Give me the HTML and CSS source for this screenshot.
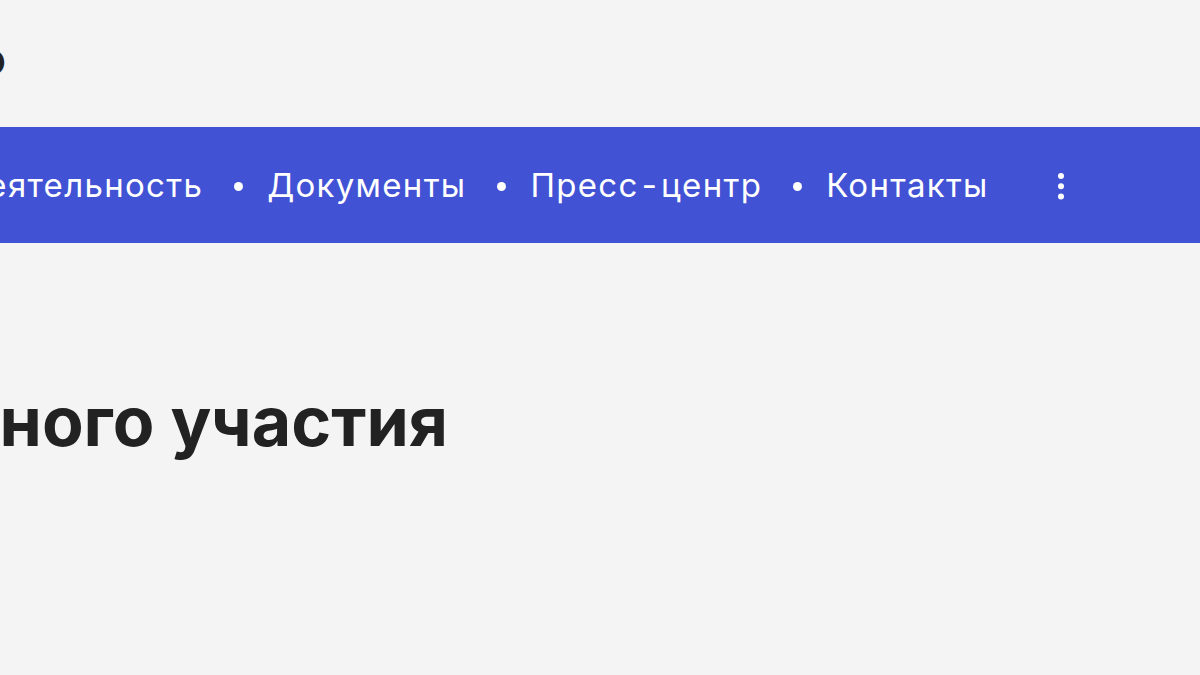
FILE: index.html
```html
<!DOCTYPE html>
<html lang="ru">
<head>
    <meta charset="UTF-8">
    <meta name="viewport" content="width=device-width, initial-scale=1.0">
    <title>Общественное участие</title>
    <link rel="stylesheet" href="styles.css">
</head>
<body>
    <div class="page">
        <!-- шапка -->
        <header class="top">
            <div class="logo-row">
                <span class="logo">Общественное бюро</span>
            </div>
        </header>

        <!-- меню -->
        <nav class="menu">
            <ul class="menu-list">
                <li><a href="javascript:;">Деятельность</a></li>
                <li class="dot"></li>
                <li><a href="javascript:;">Документы</a></li>
                <li class="dot"></li>
                <li><a href="javascript:;">Пресс<span class="dash">-</span>центр</a></li>
                <li class="dot"></li>
                <li><a href="javascript:;">Контакты</a></li>
            </ul>
            <a class="more" href="javascript:;">
                <svg width="8" height="28" viewBox="0 0 8 28">
                    <circle cx="4" cy="4" r="3" fill="#fff"/>
                    <circle cx="4" cy="14.3" r="3" fill="#fff"/>
                    <circle cx="4" cy="24.6" r="3" fill="#fff"/>
                </svg>
            </a>
        </nav>

        <!-- заголовок -->
        <main class="content">
            <div class="title-row">
                <h1 class="title">Формы общественного участия</h1>
            </div>
        </main>
    </div>
</body>
</html>
```

FILE: styles.css
```css
*{
    margin: 0;
    padding: 0;
}
html, body{
    background-color: #f4f4f4;
    overflow: hidden;
}
body{
    font-family: Inter, "Noto Sans", "Liberation Sans", sans-serif;
    color: #222222;
}
.page{
    width: 1200px;
    height: 675px;
}

/* шапка */
.top{
    height: 127px;
}
.logo-row{
    display: flex;
    justify-content: flex-end;
    width: 6px;
    padding-top: 30px;
}
.logo{
    font-size: 46px;
    font-weight: 700;
    white-space: nowrap;
    line-height: 56px;
}

/* меню */
.menu{
    height: 116px;
    background-color: #4152d4;
    display: flex;
    align-items: center;
}
.menu-list{
    list-style: none;
    display: flex;
    align-items: center;
    margin-left: -41px;
}
.menu-list a{
    color: #ffffff;
    text-decoration: none;
    font-size: 33px;
    letter-spacing: 1.3px;
    white-space: nowrap;
    line-height: 40px;
}
.dash{
    padding: 0 3px;
}
.dot{
    width: 9px;
    height: 9px;
    border-radius: 50%;
    background-color: #ffffff;
    margin: 2px 24px 0 31px;
}
.more{
    display: flex;
    margin-left: 68px;
    margin-top: 2px;
}

/* заголовок */
.content{
    padding-top: 138px;
}
.title-row{
    display: flex;
    justify-content: flex-end;
    width: 448px;
}
.title{
    font-size: 68px;
    font-weight: 700;
    line-height: 80px;
    white-space: nowrap;
}
```
